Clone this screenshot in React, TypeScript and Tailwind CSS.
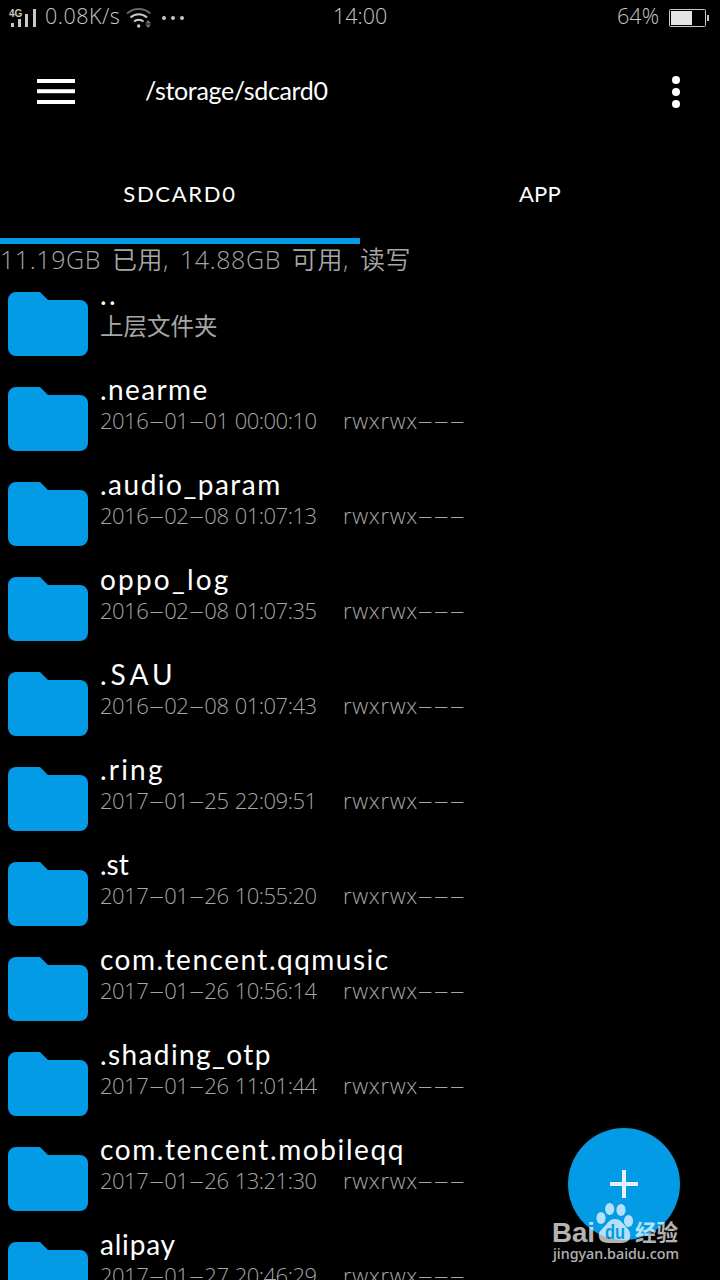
import { Fragment } from 'react'

type Entry = {
  name: string
  date: string
  mode: string
  tracking: string
}

const entries: Entry[] = [
  { name: '.nearme', date: '2016-01-01 00:00:10', mode: 'rwxrwx---', tracking: 'tracking-[1.4px]' },
  { name: '.audio_param', date: '2016-02-08 01:07:13', mode: 'rwxrwx---', tracking: 'tracking-[1.5px]' },
  { name: 'oppo_log', date: '2016-02-08 01:07:35', mode: 'rwxrwx---', tracking: 'tracking-[2.2px]' },
  { name: '.SAU', date: '2016-02-08 01:07:43', mode: 'rwxrwx---', tracking: 'tracking-[4px]' },
  { name: '.ring', date: '2017-01-25 22:09:51', mode: 'rwxrwx---', tracking: 'tracking-[2.2px]' },
  { name: '.st', date: '2017-01-26 10:55:20', mode: 'rwxrwx---', tracking: 'tracking-normal' },
  { name: 'com.tencent.qqmusic', date: '2017-01-26 10:56:14', mode: 'rwxrwx---', tracking: 'tracking-[1.5px]' },
  { name: '.shading_otp', date: '2017-01-26 11:01:44', mode: 'rwxrwx---', tracking: 'tracking-[1.4px]' },
  { name: 'com.tencent.mobileqq', date: '2017-01-26 13:21:30', mode: 'rwxrwx---', tracking: 'tracking-[1.6px]' },
  { name: 'alipay', date: '2017-01-27 20:46:29', mode: 'rwxrwx---', tracking: 'tracking-[0.8px]' },
]

export default function App() {
  return (
    <div className="relative w-[720px] h-[1280px] overflow-hidden bg-black text-white font-['Lato','Noto_Sans_CJK_SC',sans-serif]">
      <StatusBar />

      {/* Toolbar */}
      <header className="h-28 flex items-center pl-[37px] pr-[40px]">
        <svg width="38" height="26" viewBox="0 0 38 26" fill="white">
          <rect y="0" width="38" height="4" />
          <rect y="10.2" width="38" height="4" />
          <rect y="21" width="38" height="4" />
        </svg>
        <h1 className="flex-1 ml-[70px] pb-1 text-[25px] leading-8 tracking-[-0.35px]">/storage/sdcard0</h1>
        <svg width="8" height="32" viewBox="0 0 8 32" fill="white">
          <circle cx="4" cy="4" r="4" />
          <circle cx="4" cy="16" r="4" />
          <circle cx="4" cy="28" r="4" />
        </svg>
      </header>

      {/* Tabs */}
      <nav className="h-24 grid grid-cols-2 text-[22px] text-center">
        <Tab label="SDCARD0" tracking="tracking-[1.7px]" active />
        <Tab label="APP" tracking="tracking-[0.3px]" />
      </nav>

      <p className="h-[33px] text-[25px] leading-[31px] text-[#a6a6a6] font-['Open_Sans','Noto_Sans_CJK_SC',sans-serif] font-[350] whitespace-pre tracking-[0.6px] [word-spacing:3.8px]">
        11.19GB 已用, 14.88GB 可用, 读写
      </p>

      {/* File list */}
      <ul>
        <li className="h-[95px] flex pl-2 gap-3">
          <Folder />
          <div className="pt-px">
            <p className="text-[28px] leading-8 tracking-[2.5px]">..</p>
            <p className="text-[23.5px] leading-8 text-[#a6a6a6]">上层文件夹</p>
          </div>
        </li>
        {entries.map((entry) => (
          <Row key={entry.name} {...entry} />
        ))}
      </ul>

      {/* Add button */}
      <button className="absolute left-[568px] top-[1128px] size-28 rounded-full bg-[#049be6] flex items-center justify-center">
        <svg width="28" height="28" viewBox="0 0 28 28" fill="#e6f5fd">
          <path d="M12 0h4v12h12v4H16v12h-4V16H0v-4h12z" />
        </svg>
      </button>

      <Watermark />
    </div>
  )
}

function StatusBar() {
  return (
    <div className="h-9 flex items-start text-[21.5px] leading-8 text-[#c8c8c8] font-['Open_Sans',sans-serif] font-[350]">
      <div className="w-[333px] h-9 flex pl-[9px]">
        <svg width="28" height="36" viewBox="0 0 28 36" fill="#c8c8c8">
          <text x="0" y="16.5" fontSize="10" fontWeight="700" fontFamily="Liberation Sans, sans-serif">4G</text>
          <rect x="2" y="23" width="3" height="4" />
          <rect x="9" y="19" width="3" height="8" />
          <rect x="16" y="14" width="3" height="13" />
          <rect x="24" y="9" width="3" height="18" />
        </svg>
        <span className="ml-2 w-[81px] tracking-[0.5px]">0.08K/s</span>
        <svg width="60" height="36" viewBox="0 0 60 36" fill="none" stroke="#c8c8c8" strokeWidth="2">
          <path d="M1 13.5a17.5 17.5 0 0 1 23.5 0" stroke="#666" />
          <path d="M4.5 17.5a12 12 0 0 1 16.5 0" />
          <path d="M8 21.5a7 7 0 0 1 9.5 0" />
          <circle cx="12.7" cy="26" r="1.7" fill="#c8c8c8" stroke="none" />
          <path d="M22.2 20l2.8 3.4h-5.6zM22.2 28l2.8-3.4h-5.6z" fill="#777" stroke="none" />
          <g fill="#c8c8c8" stroke="none">
            <circle cx="38" cy="18" r="2" />
            <circle cx="47" cy="18" r="2" />
            <circle cx="56" cy="18" r="2" />
          </g>
        </svg>
      </div>
      <span className="flex-1">14:00</span>
      <span className="mr-[10px]">64%</span>
      <svg className="mr-[11px]" width="40" height="36" viewBox="0 0 40 36">
        <rect x="0.5" y="9.5" width="36" height="17" rx="1" fill="none" stroke="#c8c8c8" />
        <rect x="2" y="11" width="21" height="14" fill="#e4e4e4" />
        <rect x="38" y="15" width="2" height="6" fill="#c8c8c8" />
      </svg>
    </div>
  )
}

function Tab({ label, tracking, active }: { label: string; tracking: string; active?: boolean }) {
  return (
    <div className="flex flex-col">
      <span className={`h-[90px] leading-[92px] ${tracking}`}>{label}</span>
      {active && <div className="h-1.5 bg-[#049be6]" />}
    </div>
  )
}

function Row({ name, date, mode, tracking }: Entry) {
  return (
    <li className="h-[95px] flex pl-2 gap-3">
      <Folder />
      <div className="pt-px">
        <p className={`text-[28px] leading-8 ${tracking}`}>{name}</p>
        <div className="flex text-[22px] leading-[30px] text-[#a6a6a6] font-['Open_Sans',sans-serif] font-[350]">
          <p className="w-[243px] whitespace-pre tracking-[-0.5px] [word-spacing:1px]">
            <Dashed text={date} />
          </p>
          <p className="tracking-[0.7px]">
            <Dashed text={mode} />
          </p>
        </div>
      </div>
    </li>
  )
}

// Hyphens are drawn long and thin, one cell each
function Dashed({ text }: { text: string }) {
  return text.split('-').map((part, i) => (
    <Fragment key={i}>
      {i > 0 && <span className="inline-block w-[16px] text-center font-light scale-x-[2.3]">-</span>}
      {part}
    </Fragment>
  ))
}

function Folder() {
  return (
    <svg className="mt-[15px] shrink-0" width="80" height="64" viewBox="0 0 80 64" fill="#049be6">
      <path d="M8 0h24l8 8h32a8 8 0 0 1 8 8v40a8 8 0 0 1-8 8H8a8 8 0 0 1-8-8V8a8 8 0 0 1 8-8z" />
    </svg>
  )
}

function Watermark() {
  return (
    <svg
      className="absolute left-[550px] top-[1200px] opacity-70"
      width="134"
      height="66"
      viewBox="0 0 134 66"
      fill="white"
      fontFamily="Liberation Sans, Noto Sans CJK SC, sans-serif"
    >
      <text x="2" y="42" fontSize="28" fontWeight="700" textLength="43" lengthAdjust="spacingAndGlyphs">Bai</text>
      <ellipse cx="51" cy="18" rx="4.6" ry="6" />
      <ellipse cx="59.7" cy="9" rx="4.6" ry="6" />
      <ellipse cx="71" cy="10" rx="4.6" ry="6" />
      <ellipse cx="78.5" cy="21" rx="4.6" ry="6" />
      <path d="M65 19c6 0 8 5 11 8 3 3 5 5 4 10-1 6-6 6-15 6s-15 0-16-6c-1-5 2-7 5-10s5-8 11-8z" />
      <text x="55" y="39" fontSize="20" fontWeight="700" fill="#049be6" textLength="20" lengthAdjust="spacingAndGlyphs">du</text>
      <text x="85" y="41" fontSize="23" fontWeight="700" textLength="43" lengthAdjust="spacingAndGlyphs">经验</text>
      <text x="3" y="59" fontSize="15" fontFamily="Noto Sans, sans-serif" fontWeight="500" textLength="126" lengthAdjust="spacingAndGlyphs">jingyan.baidu.com</text>
    </svg>
  )
}
